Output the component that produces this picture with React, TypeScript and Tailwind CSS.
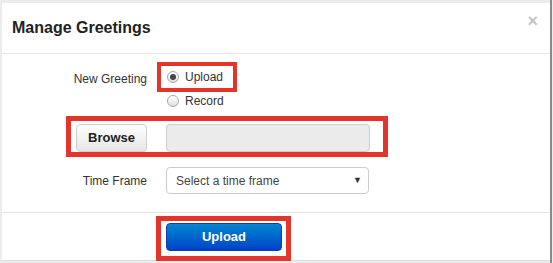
import React from "react";

function Radio({ checked }: { checked?: boolean }) {
  return (
    <span className="relative inline-flex w-[12px] h-[12px] rounded-full border border-[#a8a8a8] bg-gradient-to-b from-[#ffffff] to-[#e0e0e0] items-center justify-center">
      {checked && <span className="w-[6px] h-[6px] rounded-full bg-[#444]" />}
    </span>
  );
}

export default function App() {
  return (
    <div
      className="relative w-[553px] h-[263px] bg-[#ececec] pt-[3px] pl-[2px] flex overflow-hidden"
      style={{ fontFamily: '"Liberation Sans", Arial, sans-serif' }}
    >
      <div className="w-[548px] h-[258px] bg-white flex flex-col border-b border-[#dcdcdc]">
        {/* header */}
        <div className="h-[51px] border-b border-[#e5e5e5] flex items-center justify-between pl-[10px] pr-[12px] shrink-0">
          <h3 className="text-[16px] font-bold text-[#222] leading-none">Manage Greetings</h3>
          <span className="text-[18px] font-bold text-[#c4c4c4] leading-none -mt-[14px]">×</span>
        </div>
        {/* body */}
        <div className="flex flex-col h-[159px] border-b border-[#e5e5e5] shrink-0 text-[12px] text-[#333]">
          <div className="flex mt-[15px]">
            <div className="w-[145px] text-right pt-[2px] leading-[16px]">New Greeting</div>
            <div className="ml-[20px] flex flex-col gap-[8px]">
              <label className="flex items-center gap-[6px] h-[16px] text-[12px]">
                <Radio checked />
                <span>Upload</span>
              </label>
              <label className="flex items-center gap-[6px] h-[16px] text-[12px]">
                <Radio />
                <span>Record</span>
              </label>
            </div>
          </div>
          <div className="flex mt-[15px] items-center">
            <div className="w-[145px] flex justify-end">
              <button className="w-[71px] h-[28px] rounded-[4px] border border-[#cfcfcf] bg-gradient-to-b from-[#ffffff] to-[#e6e6e6] text-[13px] font-bold text-[#222]">
                Browse
              </button>
            </div>
            <div className="ml-[19px] w-[204px] h-[28px] rounded-[4px] border border-[#cccccc] bg-[#ebebeb]" />
          </div>
          <div className="flex mt-[15px] items-center">
            <div className="w-[145px] text-right">Time Frame</div>
            <div className="ml-[19px] w-[203px] h-[27px] rounded-[4px] border border-[#cccccc] bg-white flex items-center justify-between pl-[9px] pr-[6px] text-[#444]">
              <span>Select a time frame</span>
              <span className="text-[9px] text-[#333]">▼</span>
            </div>
          </div>
        </div>
        {/* footer */}
        <div className="flex-1 flex items-start pt-[10px]">
          <button className="ml-[164px] w-[116px] h-[28px] rounded-[4px] border border-[#0a3fae] bg-gradient-to-b from-[#0a85cf] to-[#0040c8] text-white text-[13px] font-bold">
            Upload
          </button>
        </div>
      </div>
      <div className="w-[2px] h-[263px] -mt-[3px] bg-[#8a8a8a]" />

      {/* annotation boxes */}
      <div className="absolute left-[157px] top-[62px] w-[80px] h-[30px] border-[4px] border-[#e3352b]" />
      <div className="absolute left-[66px] top-[116px] w-[322px] h-[41px] border-[5px] border-[#e3352b]" />
      <div className="absolute left-[156px] top-[216px] w-[135px] h-[45px] border-[5px] border-[#e3352b]" />
    </div>
  );
}
